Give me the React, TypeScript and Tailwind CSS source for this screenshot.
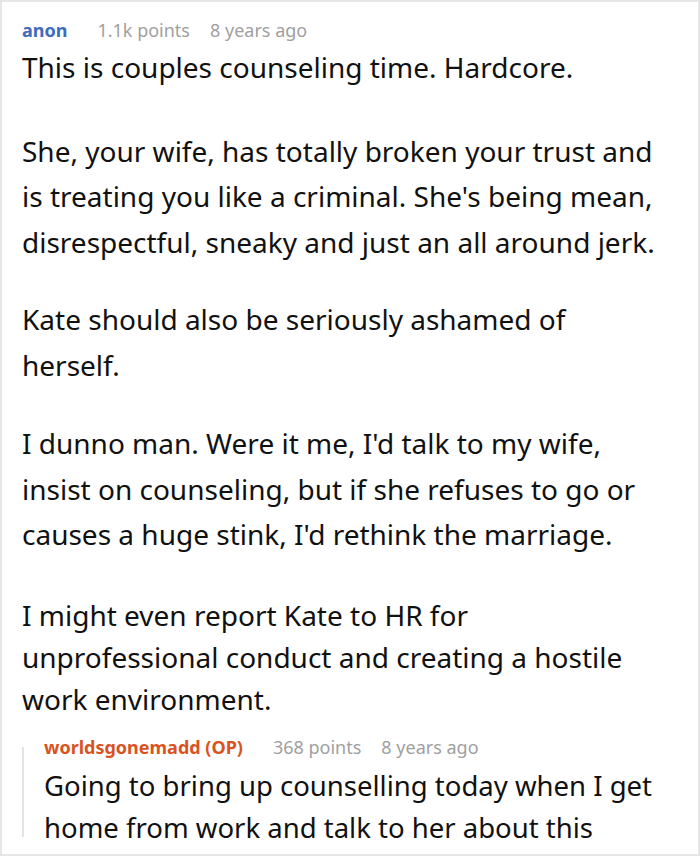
import React from "react";

const paras = [
  { t: "This is couples counseling time. Hardcore.", c: "" },
  {
    t: "She, your wife, has totally broken your trust and is treating you like a criminal. She's being mean, disrespectful, sneaky and just an all around jerk.",
    c: "mt-[38px]",
  },
  { t: "Kate should also be seriously ashamed of herself.", c: "mt-[32px]" },
  {
    t: "I dunno man. Were it me, I'd talk to my wife, insist on counseling, but if she refuses to go or causes a huge stink, I'd rethink the marriage.",
    c: "mt-[33px]",
  },
  {
    t: "I might even report Kate to HR for unprofessional conduct and creating a hostile work environment.",
    c: "mt-[36px] leading-[42px]",
  },
];

export default function App() {
  return (
    <div
      className="w-[700px] h-[856px] overflow-hidden bg-white border-2 border-[#e6e6e6] text-[#111]"
      style={{ fontFamily: '"Noto Sans", "Open Sans", sans-serif' }}
    >
      <div className="pl-[20px] pr-[36px] pt-[15px]">
        <div className="flex items-baseline text-[18px] leading-[26px]">
          <span className="font-bold text-[#3f6cbd]">anon</span>
          <span className="ml-[30px] text-[#a0a0a0]">1.1k points</span>
          <span className="ml-[20px] text-[#a0a0a0]">8 years ago</span>
        </div>
        <div className="text-[28px] leading-[45.5px] mt-[2px]">
          {paras.map((p, i) => (
            <p key={i} className={p.c}>
              {p.t}
            </p>
          ))}
        </div>
        <div className="mt-[14px] -mr-[20px] flex">
          <div className="w-[2px] shrink-0 bg-[#e3e3e3] mt-[13px] mb-[12px]" />
          <div className="pl-[20px]">
            <div className="flex items-baseline text-[18px] leading-[26px]">
              <span className="font-bold text-[#d9531e]">worldsgonemadd (OP)</span>
              <span className="ml-[30px] text-[#a0a0a0]">368 points</span>
              <span className="ml-[20px] text-[#a0a0a0]">8 years ago</span>
            </div>
            <div className="text-[27.5px] leading-[42px] mt-[5px]">
              <p>
                Going to bring up counselling today when I get home from work and talk to her about this
              </p>
            </div>
          </div>
        </div>
      </div>
    </div>
  );
}
